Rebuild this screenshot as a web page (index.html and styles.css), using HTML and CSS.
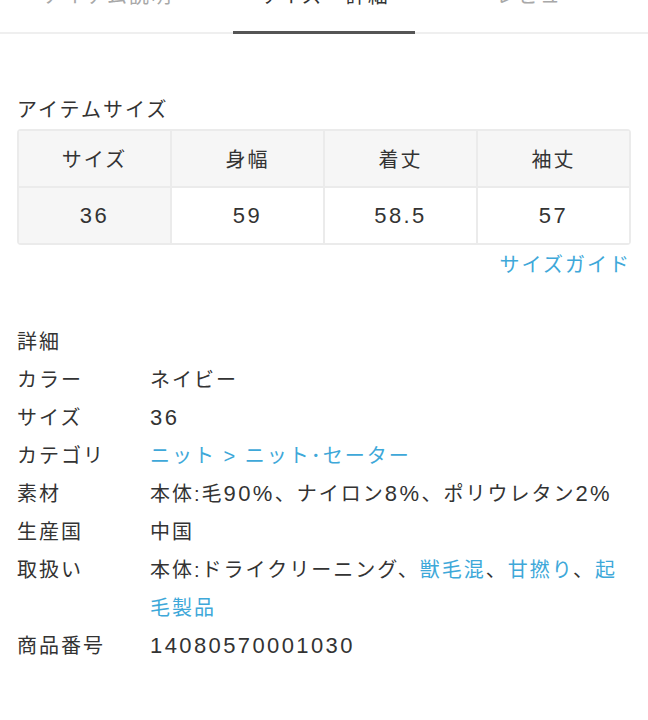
FILE: index.html
```html
<!DOCTYPE html>
<html lang="ja">
<head>
<meta charset="utf-8">
<title>サイズ・詳細</title>
<link rel="stylesheet" href="styles.css">
</head>
<body>
<nav class="tabs">
  <div class="tab">アイテム説明</div>
  <div class="tab active">サイズ・詳細</div>
  <div class="tab">レビュー</div>
</nav>
<main class="content">
  <div class="section-title">アイテムサイズ</div>
  <div class="size-table">
    <div class="cell head">サイズ</div>
    <div class="cell head">身幅</div>
    <div class="cell head">着丈</div>
    <div class="cell head">袖丈</div>
    <div class="cell key num">36</div>
    <div class="cell num">59</div>
    <div class="cell num">58.5</div>
    <div class="cell num">57</div>
  </div>
  <div class="guide"><a class="link" href="#">サイズガイド</a></div>

  <div class="detail-title">詳細</div>
  <div class="details">
    <div class="label">カラー</div><div class="value">ネイビー</div>
    <div class="label">サイズ</div><div class="value"><span class="num">36</span></div>
    <div class="label">カテゴリ</div><div class="value"><a class="link" href="#">ニット &gt; ニット･セーター</a></div>
    <div class="label">素材</div><div class="value">本体:毛<span class="num">90%</span>、ナイロン<span class="num">8%</span>、ポリウレタン<span class="num">2%</span></div>
    <div class="label">生産国</div><div class="value">中国</div>
    <div class="label">取扱い</div><div class="value">本体:ドライクリーニング、<a class="link" href="#">獣毛混</a>、<a class="link" href="#">甘撚り</a>、<a class="link" href="#">起毛製品</a></div>
    <div class="label">商品番号</div><div class="value"><span class="num">14080570001030</span></div>
  </div>
</main>
</body>
</html>
```
FILE: styles.css
```css
html, body {
  margin: 0;
  padding: 0;
  background: #fff;
}
body {
  color: #333;
  font-family: "Liberation Sans", "Noto Sans CJK JP", sans-serif;
  font-size: 20px;
  letter-spacing: 2px;
  overflow: hidden;
}
.num {
  font-size: 22px;
  letter-spacing: 2.4px;
}
.tabs {
  display: flex;
  margin-top: -19px;
  border-bottom: 2px solid #efefef;
}
.tab {
  flex: 1;
  text-align: center;
  line-height: 30px;
  padding-bottom: 21px;
  color: #a8a8a8;
  position: relative;
}
.tab.active {
  color: #333;
}
.tab.active::after {
  content: "";
  position: absolute;
  left: 17px;
  right: 17px;
  bottom: -2px;
  height: 3px;
  background: #555;
}
.content {
  padding: 0 17px;
}
.section-title {
  margin-top: 58px;
  line-height: 37px;
}
.size-table {
  display: grid;
  grid-template-columns: repeat(4, 1fr);
  gap: 2px;
  padding: 2px;
  background: #ebebeb;
  border-radius: 4px;
}
.cell {
  height: 55px;
  display: flex;
  align-items: center;
  justify-content: center;
  background: #fff;
}
.cell.head, .cell.key {
  background: #f6f6f6;
}
.guide {
  text-align: right;
  line-height: 38px;
  padding-top: 1px;
}
.link {
  color: #3ea8d9;
  text-decoration: none;
}
.detail-title {
  margin-top: 39px;
  line-height: 38px;
}
.details {
  display: grid;
  grid-template-columns: 133px 1fr;
  line-height: 38px;
}
```
